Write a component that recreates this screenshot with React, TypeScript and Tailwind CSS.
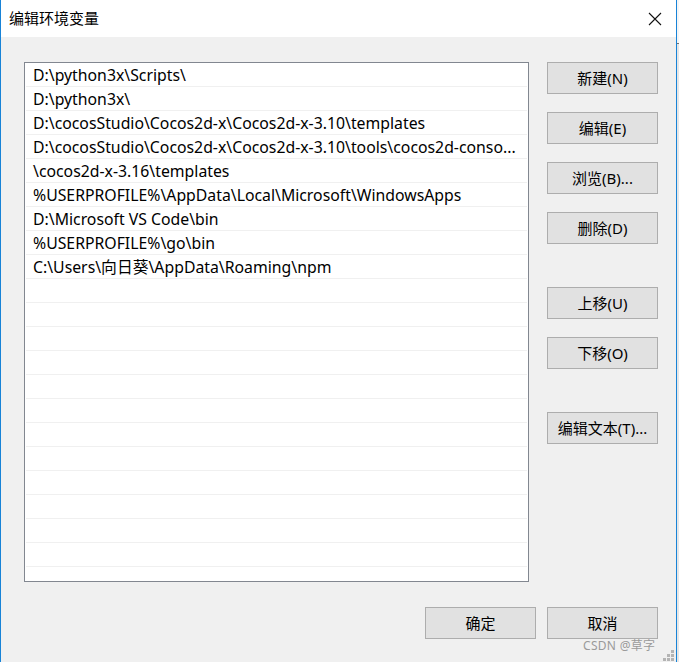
import React from 'react';

const paths = [
  'D:\\python3x\\Scripts\\',
  'D:\\python3x\\',
  'D:\\cocosStudio\\Cocos2d-x\\Cocos2d-x-3.10\\templates',
  'D:\\cocosStudio\\Cocos2d-x\\Cocos2d-x-3.10\\tools\\cocos2d-conso...',
  '\\cocos2d-x-3.16\\templates',
  '%USERPROFILE%\\AppData\\Local\\Microsoft\\WindowsApps',
  'D:\\Microsoft VS Code\\bin',
  '%USERPROFILE%\\go\\bin',
  'C:\\Users\\向日葵\\AppData\\Roaming\\npm',
];

const rows = [...paths, ...Array(13).fill('')];

const WinButton: React.FC<{ label: string; className?: string }> = ({ label, className = '' }) => (
  <button className={`w-[111px] h-[32px] shrink-0 bg-[#e1e1e1] border border-[#adadad] text-[15px] text-black flex items-center justify-center ${className}`}>
    {label}
  </button>
);

const App: React.FC = () => {
  return (
    <div
      className="relative w-[679px] h-[662px] flex bg-[#d4d4d4] overflow-hidden"
      style={{ fontFamily: '"Noto Sans", "Noto Sans CJK SC", sans-serif' }}
    >
      <div className="w-[677px] h-full shrink-0 flex flex-col bg-[#f0f0f0] border-x border-[#1883d7]">
        {/* title bar */}
        <div className="h-[37px] shrink-0 bg-white flex items-center justify-between pl-[8px] pr-[14px]">
          <span className="text-[15px] text-black">编辑环境变量</span>
          <svg width="14" height="14" viewBox="0 0 14 14" className="mt-[1px]">
            <path d="M1 1 L13 13 M13 1 L1 13" stroke="#111" strokeWidth="1.1" fill="none" />
          </svg>
        </div>

        {/* body */}
        <div className="flex pl-[23px] pt-[25px]">
          <div className="w-[505px] h-[520px] shrink-0 border border-[#828790] bg-white overflow-hidden">
            {rows.map((p, i) => (
              <div key={i} className="h-[24px] mx-[1px] border-b border-[#f0f0f0] flex items-center pl-[7px]">
                <span className="text-[15.8px] text-black whitespace-nowrap leading-[22px] pt-[1px]">{p}</span>
              </div>
            ))}
          </div>

          <div className="flex flex-col ml-[18px]">
            <WinButton label="新建(N)" />
            <WinButton label="编辑(E)" className="mt-[18px]" />
            <WinButton label="浏览(B)..." className="mt-[18px]" />
            <WinButton label="删除(D)" className="mt-[18px]" />
            <WinButton label="上移(U)" className="mt-[43px]" />
            <WinButton label="下移(O)" className="mt-[18px]" />
            <WinButton label="编辑文本(T)..." className="mt-[43px]" />
          </div>
        </div>

        {/* footer */}
        <div className="flex justify-end gap-[11px] pr-[18px] mt-[25px]">
          <WinButton label="确定" />
          <WinButton label="取消" />
        </div>
      </div>

      {/* neighbouring window edge */}
      <div className="flex-1 flex flex-col">
        <div className="h-[43px] bg-[#f5f5f5]" />
        <div className="h-[1px] bg-[#707070]" />
        <div className="flex-1 bg-[#e6e6e6]" />
      </div>

      {/* watermark */}
      <span className="absolute left-[583px] top-[637px] text-[12px] text-[#9a9a9a] tracking-[0.3px]">
        CSDN @草字
      </span>

      {/* size grip */}
      <svg width="11" height="11" viewBox="0 0 11 11" className="absolute left-[663px] top-[650px]">
        <rect x="8" y="0" width="3" height="3" fill="#b4b4b4" />
        <rect x="4" y="4" width="3" height="3" fill="#b4b4b4" />
        <rect x="8" y="4" width="3" height="3" fill="#b4b4b4" />
        <rect x="0" y="8" width="3" height="3" fill="#b4b4b4" />
        <rect x="4" y="8" width="3" height="3" fill="#b4b4b4" />
        <rect x="8" y="8" width="3" height="3" fill="#b4b4b4" />
      </svg>
    </div>
  );
};

export default App;
